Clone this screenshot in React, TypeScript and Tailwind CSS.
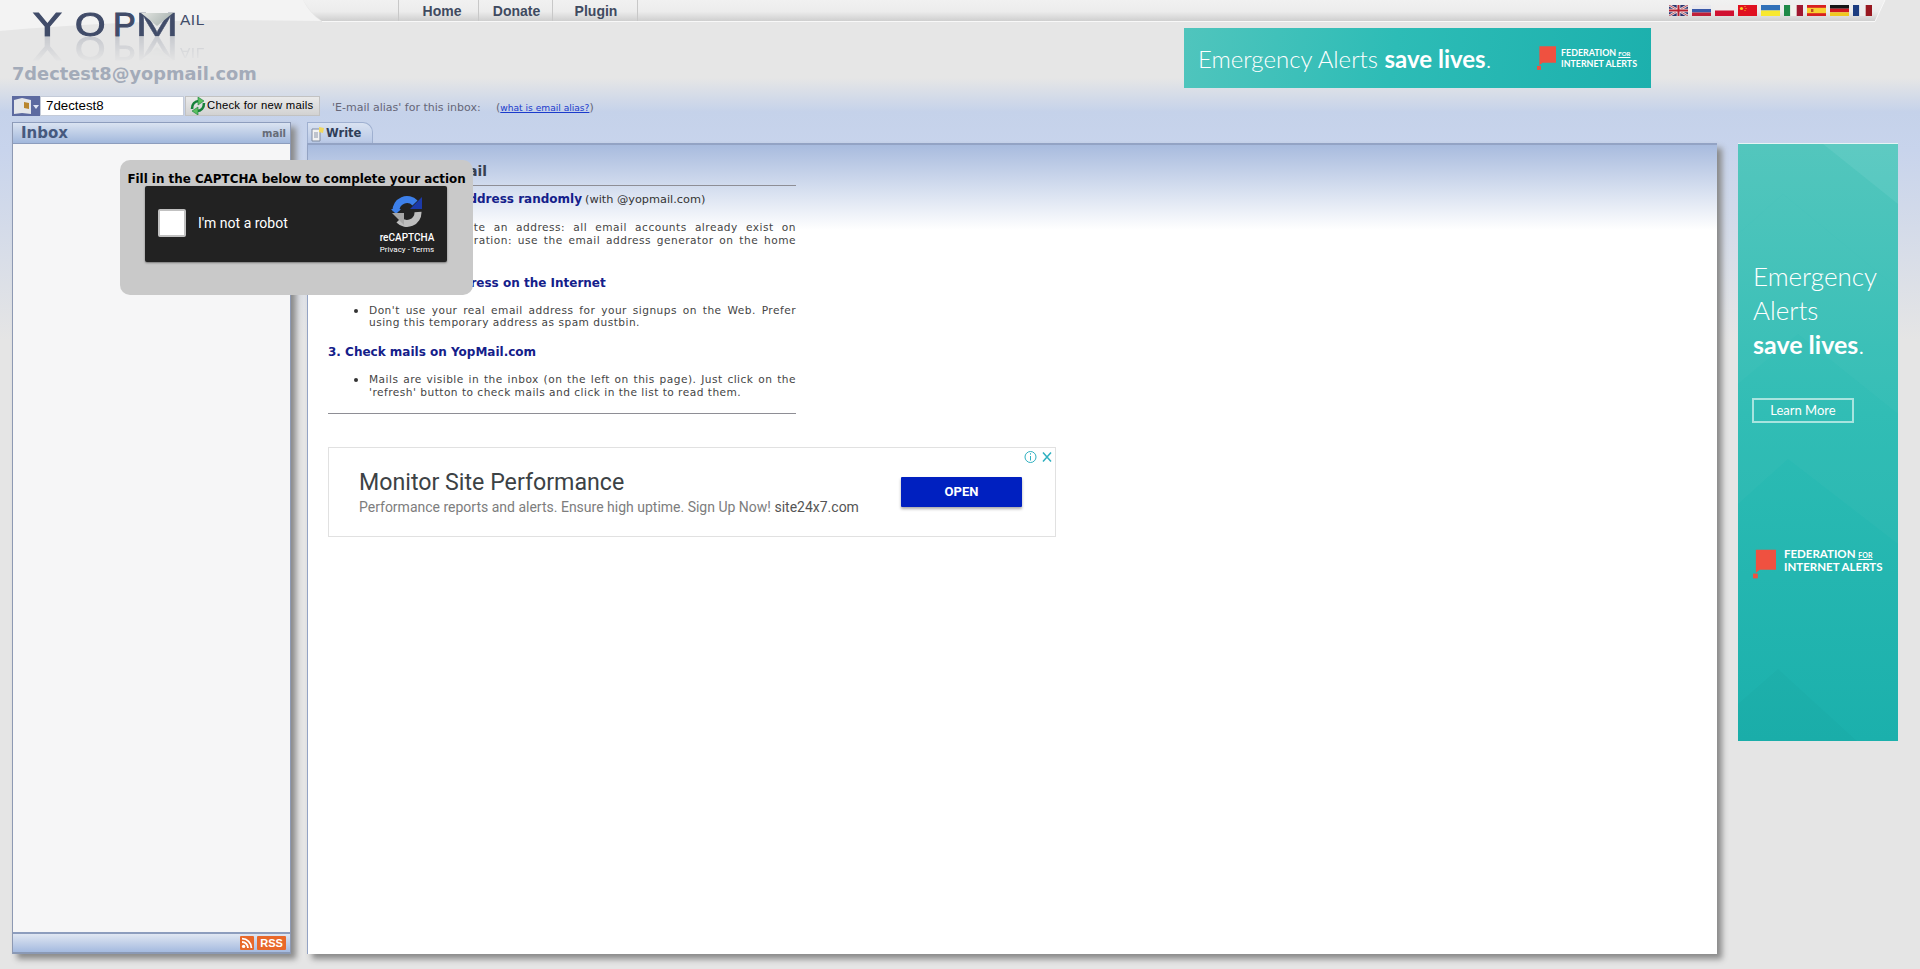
const Flag = ({ children }: { children: React.ReactNode }) => (
  <svg width="19" height="11" viewBox="0 0 19 11" className="block">{children}</svg>
);

const flags = [
  <Flag key="uk">
    <rect width="19" height="11" fill="#2b3570" />
    <path d="M0 0L19 11M19 0L0 11" stroke="#e8dfe0" strokeWidth="2.4" />
    <path d="M0 0L19 11M19 0L0 11" stroke="#b03040" strokeWidth="0.8" />
    <path d="M9.5 0V11M0 5.5H19" stroke="#eee" strokeWidth="3.6" />
    <path d="M9.5 0V11M0 5.5H19" stroke="#b82030" strokeWidth="2" />
  </Flag>,
  <Flag key="ru">
    <rect width="19" height="4" fill="#e8e8ee" />
    <rect y="4" width="19" height="3.5" fill="#3858a8" />
    <rect y="7.5" width="19" height="3.5" fill="#c02038" />
  </Flag>,
  <Flag key="pl">
    <rect width="19" height="5.5" fill="#f0eeee" />
    <rect y="5.5" width="19" height="5.5" fill="#d01030" />
  </Flag>,
  <Flag key="cn">
    <rect width="19" height="11" fill="#e01020" />
    <circle cx="3.5" cy="3.5" r="1.6" fill="#f8d020" />
    <circle cx="7" cy="1.5" r="0.6" fill="#f8d020" />
    <circle cx="8" cy="3.5" r="0.6" fill="#f8d020" />
    <circle cx="7" cy="5.5" r="0.6" fill="#f8d020" />
  </Flag>,
  <Flag key="ua">
    <rect width="19" height="5.5" fill="#3070b8" />
    <rect y="5.5" width="19" height="5.5" fill="#f8e830" />
  </Flag>,
  <Flag key="it">
    <rect width="6.3" height="11" fill="#1f8a48" />
    <rect x="6.3" width="6.4" height="11" fill="#f2f2ee" />
    <rect x="12.7" width="6.3" height="11" fill="#a01830" />
  </Flag>,
  <Flag key="es">
    <rect width="19" height="11" fill="#d82020" />
    <rect y="2.8" width="19" height="5.4" fill="#f8d030" />
    <rect x="4" y="4" width="2.4" height="3" fill="#c05020" />
  </Flag>,
  <Flag key="de">
    <rect width="19" height="3.7" fill="#151515" />
    <rect y="3.7" width="19" height="3.6" fill="#d01820" />
    <rect y="7.3" width="19" height="3.7" fill="#f0c820" />
  </Flag>,
  <Flag key="fr">
    <rect width="6.3" height="11" fill="#1c3c80" />
    <rect x="6.3" width="6.4" height="11" fill="#eeeeee" />
    <rect x="12.7" width="6.3" height="11" fill="#981820" />
  </Flag>,
];

const LogoRow = () => (
  <div className="flex h-[24px] items-start text-[34px] leading-[24px] [-webkit-text-stroke:1.1px_#414c69]">
    <span className="w-[42px] origin-left scale-x-[1.27]">Y</span>
    <span className="w-[38px] origin-left scale-x-[1.15]">O</span>
    <span className="w-[22px]">P</span>
    <span className="relative h-[24px] w-[45px]">
      <span className="absolute left-0 top-0 origin-left scale-x-[1.55] [-webkit-text-stroke:0.3px_#414c69]">M</span>
      <span className="absolute left-[6px] top-[1px] h-[13px] w-[32px] bg-[linear-gradient(135deg,#e4e6e2,#a0aba9)] [clip-path:polygon(0_0,100%_0,50%_100%)]" />
    </span>
    <span className="mt-[2px] text-[15.5px] leading-[12px] tracking-[0.5px] [-webkit-text-stroke:0px_#414c69]">AIL</span>
  </div>
);

const Logo = () => (
  <div className="relative h-[50px] w-[240px] font-['Liberation_Sans',sans-serif] text-[#414c69]">
    <div className="absolute left-[33px] top-0">
      <LogoRow />
    </div>
    <div
      aria-hidden="true"
      className="absolute left-[33px] top-[25px] h-[26px] opacity-[0.18] [mask-image:linear-gradient(180deg,#000,transparent)]"
    >
      <div className="-scale-y-100">
        <LogoRow />
      </div>
    </div>
  </div>
);

const RedFlag = ({ w, h }: { w: number; h: number }) => (
  <svg width={w} height={h} viewBox="0 0 24 30" className="block shrink-0">
    <path d="M3 0H24V21H7L3 24Z" fill="#ef5140" />
    <rect x="0" y="25" width="5" height="5" fill="#ef5140" />
  </svg>
);

const TopBanner = () => (
  <div className="relative flex h-[60px] w-[467px] items-center overflow-hidden bg-[linear-gradient(100deg,#50c5bd_0%,#2dbcb6_45%,#1cb0ad_100%)] font-['Lato',sans-serif] text-white">
    <span className="ml-[14px] mt-[1px] w-[339px] whitespace-nowrap text-[24px]">
      <span className="font-light">Emergency Alerts </span>
      <span className="font-bold">save lives</span>
      <span className="font-light">.</span>
    </span>
    <RedFlag w={19} h={24} />
    <span className="ml-[5px] text-[8.9px] font-bold leading-[10px] whitespace-nowrap">
      FEDERATION <span className="text-[6px] underline">FOR</span>
      <br />
      INTERNET ALERTS
    </span>
  </div>
);

const SideBanner = () => (
  <div className="relative flex h-[598px] w-[160px] flex-col overflow-hidden border-t border-[#e6f5f4] bg-[linear-gradient(180deg,#4cc4bb_0%,#2dbcb4_45%,#1bb0ac_100%)] pl-[14px] font-['Lato',sans-serif] text-white">
    <svg className="absolute left-0 top-0" width="160" height="598" viewBox="0 0 160 598">
      <path d="M85 0L160 60V0Z" fill="#fff" opacity=".1" />
      <path d="M0 90L45 50L160 145V60L85 0H0Z" fill="#fff" opacity=".04" />
      <path d="M0 240L60 190L160 270V145L45 50L0 90Z" fill="#fff" opacity=".04" />
      <path d="M0 360L50 315L160 400V270L60 190L0 240Z" fill="#fff" opacity=".025" />
      <path d="M0 598V560L40 525L120 598Z" fill="#000" opacity=".015" />
    </svg>
    <div className="relative ml-[1px] mt-[115px] text-[26px] font-light leading-[34px]">
      Emergency
      <br />
      Alerts
      <br />
      <span className="text-[25px] font-bold">save lives</span>.
    </div>
    <div className="relative mt-[37px] flex h-[25px] w-[102px] items-center justify-center border-2 border-[#a8e4df] text-[13px]">
      Learn More
    </div>
    <div className="relative ml-[1px] mt-[126px] flex items-start">
      <RedFlag w={23} h={30} />
      <span className="ml-[8px] mt-[-1px] text-[11.5px] font-bold leading-[12px] whitespace-nowrap">
        FEDERATION <span className="text-[7px] underline">FOR</span>
        <br />
        INTERNET ALERTS
      </span>
    </div>
  </div>
);

const Captcha = () => (
  <div className="absolute left-[120px] top-[160px] h-[135px] w-[353px] rounded-[10px] bg-[#c9c9c9] font-['DejaVu_Sans',sans-serif]">
    <div className="mt-[11px] h-[15px] text-center text-[11.9px] font-bold leading-[17px] whitespace-nowrap text-black">
      Fill in the CAPTCHA below to complete your action
    </div>
    <div className="ml-[25px] flex h-[76px] w-[302px] items-center rounded-[2px] bg-[#222222] shadow-[0_1px_2px_#777] font-['Roboto',sans-serif] text-white">
      <div className="ml-[13px] mt-[-2px] h-[28px] w-[28px] rounded-[2px] border-2 border-[#c1c1c1] bg-white" />
      <div className="ml-[12px] mt-[-2px] w-[176px] text-[14px]">I'm not a robot</div>
      <div className="flex w-[66px] flex-col items-center">
        <svg width="32" height="32" viewBox="0 0 32 32" className="mt-[3px]">
          <path d="M5 16A11 11 0 0 1 24 8" fill="none" stroke="#3d80ea" strokeWidth="7" />
          <path d="M19 14H31V2Z" fill="#1c3aa9" />
          <path d="M0 14L5 19L10 14Z" fill="#3d80ea" />
          <path d="M27 17A11 11 0 0 1 8 25" fill="none" stroke="#bdbdbd" strokeWidth="7" />
          <path d="M1 18H13V30Z" fill="#a6a6a6" />
        </svg>
        <div className="mt-[5px] text-[10px] font-medium leading-[12px]">reCAPTCHA</div>
        <div className="text-[8px] leading-[12px]">Privacy - Terms</div>
      </div>
    </div>
  </div>
);

const Body = ({ children }: { children: React.ReactNode }) => (
  <div className="ml-[26px] flex">
    <span className="mr-[12px] mt-[5px] h-[4px] w-[4px] shrink-0 rounded-full bg-[#333]" />
    <p className="ml-[-1px] flex-1 text-justify text-[10.6px] leading-[12.6px] tracking-[0.48px] text-[#444]">{children}</p>
  </div>
);

const H = ({ children, className }: { children: React.ReactNode; className: string }) => (
  <div className={`text-[12px] font-bold leading-[15px] whitespace-nowrap text-[#14208a] ${className}`}>{children}</div>
);

export default function App() {
  return (
    <div className="relative flex h-[969px] w-full flex-col overflow-hidden bg-[linear-gradient(180deg,#e6e6e6_0,#e6e6e6_78px,#c5d2ea_112px,#c8d4ec_150px,#e5e5e5_340px)] font-['DejaVu_Sans',sans-serif]">
      <svg className="absolute left-0 top-0" width="1920" height="32" viewBox="0 0 1920 32">
        <defs>
          <linearGradient id="navbar" x1="0" y1="0" x2="0" y2="1">
            <stop offset="0" stopColor="#f1f1f1" />
            <stop offset=".55" stopColor="#ececec" />
            <stop offset="1" stopColor="#cfcfcf" />
          </linearGradient>
        </defs>
        <path d="M0 0H303Q310 14 321 21L220 20Q100 22 0 31Z" fill="#f3f3f3" />
        <path d="M303 0H1885L1875 21H322Q311 14 303 0Z" fill="url(#navbar)" />
        <path d="M322 21.5H1875L1885 0" fill="none" stroke="#f8f8f8" />
      </svg>

      <header className="relative flex h-[96px]">
        <div className="flex w-[398px] shrink-0 flex-col pt-[12px]">
          <Logo />
          <div className="ml-[12px] mt-[1px] text-[17.8px] font-bold leading-[22px] whitespace-nowrap text-[#a3abb9]">
            7dectest8@yopmail.com
          </div>
        </div>
        <div className="flex flex-1 flex-col">
          <div className="flex h-[22px] items-start justify-between">
            <nav className="flex h-[21px] font-['Liberation_Sans',sans-serif] text-[14px] font-bold text-[#3f4a60]">
              <a className="flex w-[81px] items-center justify-center border-x border-[#c8c8c8] pl-[7px] pt-[1px]">Home</a>
              <a className="flex w-[74px] items-center justify-center border-r border-[#c8c8c8] pl-[2px] pt-[1px]">Donate</a>
              <a className="flex w-[85px] items-center justify-center border-r border-[#c8c8c8] pl-[2px] pt-[1px]">Plugin</a>
            </nav>
            <div className="mr-[48px] mt-[5px] flex gap-[4px]">{flags}</div>
          </div>
          <div className="ml-[786px] mt-[6px]">
            <TopBanner />
          </div>
        </div>
      </header>

      <div className="relative flex h-[20px] pl-[12px]">
        <svg width="28" height="20" viewBox="0 0 28 20" className="block shrink-0">
          <rect width="28" height="20" fill="#5c6aa0" />
          <path d="M2 4L10 2V17L2 18ZM10 2L19 4V18L10 17Z" fill="#e4e6ea" />
          <path d="M12 6L17 7V13L12 12Z" fill="#b9862f" />
          <path d="M21 9H27L24 13Z" fill="#dfe5f4" />
        </svg>
        <div className="flex w-[144px] items-center border border-[#c4cbd8] bg-white pl-[5px] font-['Liberation_Sans',sans-serif] text-[13.3px] text-black">
          7dectest8
        </div>
        <div className="ml-[1px] flex w-[135px] items-center border border-[#c2c2c2] bg-[linear-gradient(180deg,#eaeaea,#d2d2d2)] font-['Liberation_Sans',sans-serif] text-[11.3px] leading-none whitespace-nowrap text-black">
          <svg width="18" height="18" viewBox="0 0 18 18" className="ml-[3px] shrink-0">
            <path d="M3 12C3 7 6 4 10 4" fill="none" stroke="#16803a" strokeWidth="2.6" />
            <path d="M9 0L15 4L9 8Z" fill="#5cc060" stroke="#16803a" strokeWidth=".6" />
            <path d="M15 6C15 11 12 14 8 14" fill="none" stroke="#16803a" strokeWidth="2.6" />
            <path d="M9 18L3 14L9 10Z" fill="#5cc060" stroke="#16803a" strokeWidth=".6" />
          </svg>
          <span className="mb-[1px] tracking-[0.25px]">Check for new mails</span>
        </div>
        <div className="ml-[12px] mt-[5px] flex text-[11px] leading-[14px] whitespace-nowrap text-[#667]">
          <span className="w-[164px]">'E-mail alias' for this inbox:</span>
          <span>
            (<a className="text-[9.1px] text-[#1a3acc] underline">what is email alias?</a>)
          </span>
        </div>
      </div>

      <main className="relative mt-[6px] flex h-[832px] items-start">
        <section className="ml-[12px] flex h-[832px] w-[279px] shrink-0 flex-col border-x border-[#8d99b3] shadow-[5px_5px_6px_#8a8a8a]">
          <div className="flex h-[22px] items-center justify-between border-y border-y-[#8d9dbd] bg-[linear-gradient(180deg,#dae3f1,#a2b8dc)] pl-[8px] pr-[4px]">
            <span className="text-[15px] font-bold text-[#46597e]">Inbox</span>
            <span className="text-[10px] font-bold text-[#666c78]">mail</span>
          </div>
          <div className="flex-1 bg-[#f6f6f7]" />
          <div className="flex h-[22px] items-center justify-end gap-[3px] border-y-2 border-t-[#8d9dbd] border-b-[#8a99b5] bg-[linear-gradient(180deg,#e0e7f2,#a4badf)] pr-[4px]">
            <svg width="14" height="14" viewBox="0 0 14 14" className="block">
              <rect width="14" height="14" rx="1" fill="#e8682a" />
              <circle cx="3.6" cy="10.4" r="1.7" fill="#fff" />
              <path d="M2 6a6 6 0 0 1 6 6M2 2.6a9.4 9.4 0 0 1 9.4 9.4" fill="none" stroke="#fff" strokeWidth="1.8" />
            </svg>
            <span className="flex h-[14px] w-[29px] items-center justify-center rounded-[1px] bg-[#e8682a] font-['Liberation_Sans',sans-serif] text-[11px] font-bold leading-none text-white">
              RSS
            </span>
          </div>
        </section>

        <section className="ml-[16px] flex h-[832px] w-[1410px] shrink-0 flex-col">
          <div className="flex h-[21px]">
            <div className="flex w-[66px] items-center rounded-tr-[10px] border-r border-t border-l border-[#9fb0d0] bg-[linear-gradient(180deg,#d9e2f1,#b8c8e6)] pt-[1px]">
              <svg width="16" height="16" viewBox="0 0 16 16" className="ml-[2px] shrink-0">
                <path d="M2 3H10V15H2Z" fill="#f2f2f2" stroke="#7f8aa0" />
                <path d="M4 7H8M4 9H8M4 11H8" stroke="#8a94a8" />
                <path d="M9 1L14 2L13 7L9 6Z" fill="#f0d860" />
              </svg>
              <span className="text-[11.5px] font-bold text-[#2f3d58]">Write</span>
            </div>
          </div>
          <div className="flex-1 border border-t-2 border-[#93a3c4] border-r-0 border-b-0 bg-[linear-gradient(180deg,#a8bbde_0,#ffffff_85px)] pl-[20px] shadow-[5px_5px_6px_#8a8a8a]">
            <div className="h-[41px] w-[468px] border-b border-[#8e8e95] pl-[1px] pt-[17px]">
              <div className="text-[13.8px] font-bold leading-[18px] whitespace-nowrap text-[#38404f]">Use your free e-mail</div>
            </div>
            <div className="w-[468px]">
              <div className="mt-[6px] flex h-[15px] items-baseline whitespace-nowrap">
                <H className="">1. Choose an email address randomly</H>
                <span className="ml-[3px] text-[11.3px] text-[#333]">(with @yopmail.com)</span>
              </div>
              <div className="mt-[14px]">
                <Body>
                  No need to create an address: all email accounts already exist on YOPmail. No inspiration: use the email address generator on the home page.
                </Body>
              </div>
              <H className="mt-[17px]">2. Use this email address on the Internet</H>
              <div className="mt-[13px]">
                <Body>Don't use your real email address for your signups on the Web. Prefer using this temporary address as spam dustbin.</Body>
              </div>
              <H className="mt-[16px]">3. Check mails on YopMail.com</H>
              <div className="mt-[13px]">
                <Body>Mails are visible in the inbox (on the left on this page). Just click on the 'refresh' button to check mails and click in the list to read them.</Body>
              </div>
              <div className="mt-[15px] h-[1px] bg-[#8e8e95]" />
            </div>
            <div className="relative mt-[33px] flex h-[90px] w-[728px] items-center border border-[#e1e1e1] bg-white font-['Roboto',sans-serif]">
              <div className="ml-[30px] w-[542px]">
                <div className="text-[23.2px] leading-[28px] text-[#3c4245]">Monitor Site Performance</div>
                <div className="mt-[2px] text-[14px] leading-[18px] whitespace-nowrap text-[#7d7d7d]">
                  Performance reports and alerts. Ensure high uptime. Sign Up Now! <span className="text-[#555]">site24x7.com</span>
                </div>
              </div>
              <div className="flex h-[30px] w-[121px] items-center justify-center rounded-[1px] bg-[#0020c0] text-[13px] font-bold text-white shadow-[0_2px_3px_#aaa]">
                OPEN
              </div>
              <svg className="absolute right-[2px] top-[1px]" width="30" height="16" viewBox="0 0 30 16">
                <circle cx="7.5" cy="8" r="5.5" fill="none" stroke="#2eb0c0" />
                <path d="M7.5 7V11.5M7.5 4.2V5.6" stroke="#2eb0c0" />
                <path d="M20 3.5L28 12.5M28 3.5L20 12.5" stroke="#2eb0c0" strokeWidth="1.5" />
              </svg>
            </div>
          </div>
        </section>

        <div className="ml-[21px] shrink-0 pt-[21px]">
          <SideBanner />
        </div>
      </main>

      <Captcha />
    </div>
  );
}
